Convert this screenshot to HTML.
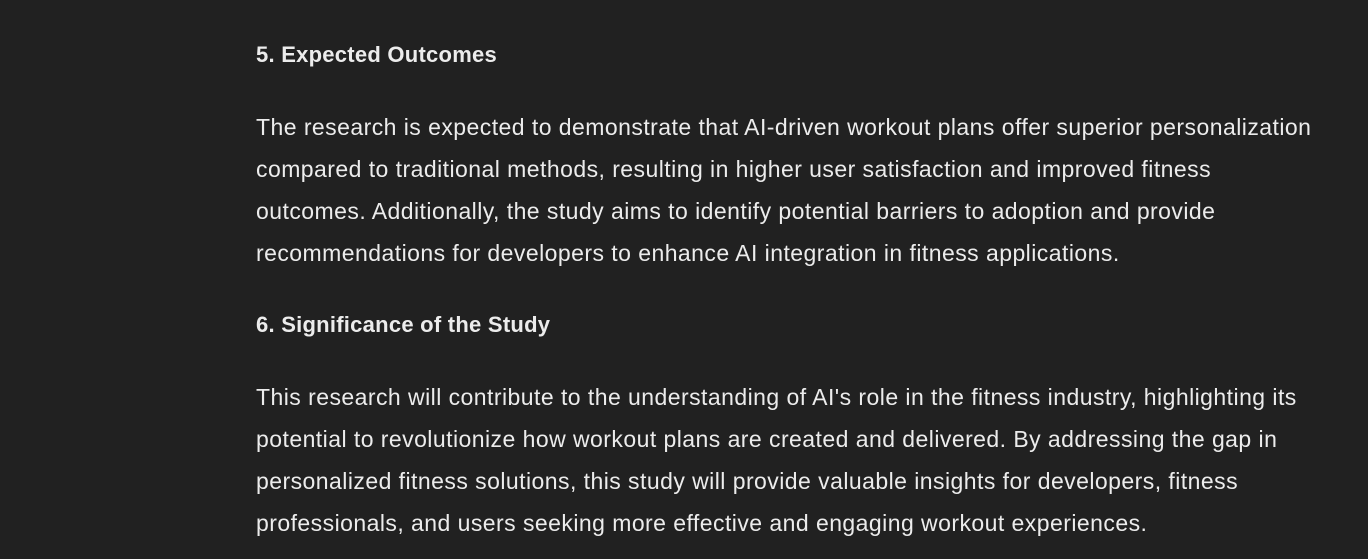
<!DOCTYPE html>
<html><head><meta charset="utf-8"><style>
html,body{margin:0;padding:0;background:#212121;width:1368px;height:559px;overflow:hidden}
body{font-family:"Liberation Sans",sans-serif;color:#ececec;position:relative}
.b{position:absolute;left:256px;white-space:nowrap;font-size:23px;letter-spacing:0.45px;line-height:42px}
h3{position:absolute;left:256px;margin:0;font-size:22px;letter-spacing:0.25px;line-height:42px;font-weight:bold;white-space:nowrap}
</style></head><body>
<h3 style="top:34px">5. Expected Outcomes</h3>
<div class="b" style="top:106px">The research is expected to demonstrate that AI-driven workout plans offer superior personalization<br>compared to traditional methods, resulting in higher user satisfaction and improved fitness<br>outcomes. Additionally, the study aims to identify potential barriers to adoption and provide<br>recommendations for developers to enhance AI integration in fitness applications.</div>
<h3 style="top:304px">6. Significance of the Study</h3>
<div class="b" style="top:376px">This research will contribute to the understanding of AI's role in the fitness industry, highlighting its<br>potential to revolutionize how workout plans are created and delivered. By addressing the gap in<br>personalized fitness solutions, this study will provide valuable insights for developers, fitness<br>professionals, and users seeking more effective and engaging workout experiences.</div>
</body></html>
